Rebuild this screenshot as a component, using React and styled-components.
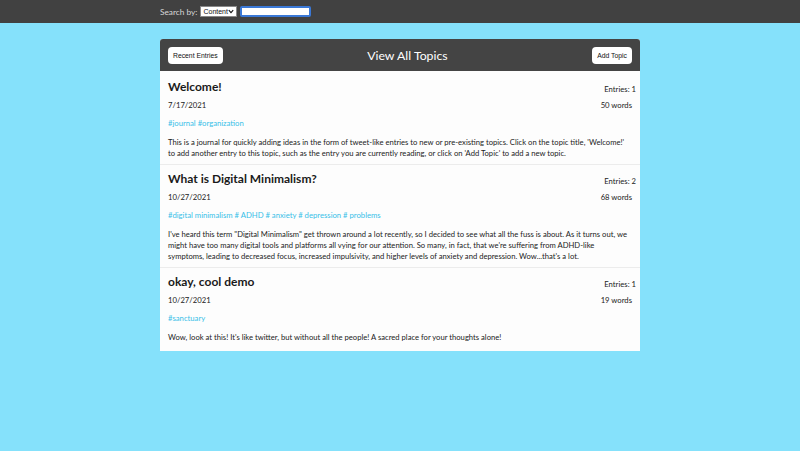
import React from "react";
import styled, { createGlobalStyle } from "styled-components";

const GlobalStyle = createGlobalStyle`
  html, body {
    margin: 0;
    padding: 0;
    background: #85e1fb;
    font-family: Lato, "Liberation Sans", sans-serif;
  }
`;

const TopBar = styled.div`
  height: 23px;
  background: #414141;
  display: flex;
  align-items: center;
  padding-left: 160px;
  font-size: 8.3px;
  color: #d8d8d8;
`;

const SelectWrap = styled.div`
  position: relative;
  margin-left: 3px;
  display: flex;
`;

const Select = styled.select`
  appearance: none;
  font-family: "Liberation Sans", Arial, sans-serif;
  font-size: 7px;
  width: 37px;
  height: 11px;
  padding: 0 0 0 2px;
  margin: 0;
  border: 1px solid #888;
  border-radius: 0;
  background: #fff;
  color: #111;
`;

const Chevron = styled.svg`
  position: absolute;
  right: 3px;
  top: 3px;
  width: 6px;
  height: 5px;
  pointer-events: none;
`;

const SearchInput = styled.input`
  box-sizing: border-box;
  width: 71px;
  height: 11px;
  margin: 0 0 0 3px;
  padding: 0;
  border: 2px solid #3a78d6;
  border-radius: 2px;
  background: #fff;
  outline: none;
`;

const Panel = styled.div`
  width: 480px;
  margin: 16px auto 0;
  background: #fdfdfd;
  border-radius: 3px 3px 0 0;
  overflow: hidden;
`;

const PanelHeader = styled.div`
  height: 32px;
  background: #444444;
  display: flex;
  align-items: center;
  justify-content: space-between;
  padding: 0 8px;
`;

const PanelTitle = styled.h1`
  margin: 0;
  font-size: 12.3px;
  font-weight: 400;
  color: #fff;
`;

const HeaderButton = styled.button`
  font-family: "Liberation Sans", Arial, sans-serif;
  font-size: 6.8px;
  color: #111;
  background: #fff;
  border: none;
  border-radius: 4px;
  height: 17px;
  padding: 0 5px;
`;

const Card = styled.div`
  padding: ${(p) => (p.$first ? 8 : 6)}px 4px ${(p) => (p.$last ? 8 : 5)}px 8px;
  border-top: ${(p) => (p.$first ? "none" : "1px solid #ececec")};
`;

const Row = styled.div`
  display: flex;
  justify-content: space-between;
  align-items: flex-start;
`;

const Title = styled.h2`
  margin: 0;
  font-size: 12px;
  line-height: 16px;
  font-weight: 700;
  color: #1a1a1a;
`;

const Meta = styled.span`
  font-size: 7.7px;
  line-height: 10px;
  color: #222;
  margin-top: ${(p) => p.$top || 0}px;
  margin-right: ${(p) => p.$inset || 0}px;
`;

const DateRow = styled(Row)`
  margin-top: 5px;
`;

const Tags = styled.div`
  margin-top: 8px;
  font-size: 7.7px;
  line-height: 11px;
  color: #38bfe8;
`;

const Body = styled.p`
  margin: 8px 0 0;
  font-size: 7.65px;
  line-height: 11px;
  color: #222;
  padding-right: 4px;
`;

const topics = [
  {
    title: "Welcome!",
    entries: 1,
    date: "7/17/2021",
    words: 50,
    tags: "#journal #organization",
    body:
      "This is a journal for quickly adding ideas in the form of tweet-like entries to new or pre-existing topics. Click on the topic title, 'Welcome!' to add another entry to this topic, such as the entry you are currently reading, or click on 'Add Topic' to add a new topic.",
  },
  {
    title: "What is Digital Minimalism?",
    entries: 2,
    date: "10/27/2021",
    words: 68,
    tags: "#digital minimalism # ADHD # anxiety # depression # problems",
    body:
      "I've heard this term \"Digital Minimalism\" get thrown around a lot recently, so I decided to see what all the fuss is about. As it turns out, we might have too many digital tools and platforms all vying for our attention. So many, in fact, that we're suffering from ADHD-like symptoms, leading to decreased focus, increased impulsivity, and higher levels of anxiety and depression. Wow...that's a lot.",
  },
  {
    title: "okay, cool demo",
    entries: 1,
    date: "10/27/2021",
    words: 19,
    tags: "#sanctuary",
    body:
      "Wow, look at this! It's like twitter, but without all the people! A sacred place for your thoughts alone!",
  },
];

export default function App() {
  return (
    <>
      <GlobalStyle />
      <TopBar>
        <span>Search by:</span>
        <SelectWrap>
          <Select defaultValue="Content">
            <option>Content</option>
            <option>Title</option>
          </Select>
          <Chevron viewBox="0 0 6 5">
            <path d="M0.8 1.2 L3 3.6 L5.2 1.2" fill="none" stroke="#111" strokeWidth="1.1" />
          </Chevron>
        </SelectWrap>
        <SearchInput />
      </TopBar>
      <Panel>
        <PanelHeader>
          <HeaderButton>Recent Entries</HeaderButton>
          <PanelTitle>View All Topics</PanelTitle>
          <HeaderButton>Add Topic</HeaderButton>
        </PanelHeader>
        {topics.map((t, i) => (
          <Card key={t.title} $first={i === 0} $last={i === topics.length - 1}>
            <Row>
              <Title>{t.title}</Title>
              <Meta $top={5}>Entries: {t.entries}</Meta>
            </Row>
            <DateRow>
              <Meta>{t.date}</Meta>
              <Meta $inset={4}>{t.words} words</Meta>
            </DateRow>
            <Tags>{t.tags}</Tags>
            <Body>{t.body}</Body>
          </Card>
        ))}
      </Panel>
    </>
  );
}
